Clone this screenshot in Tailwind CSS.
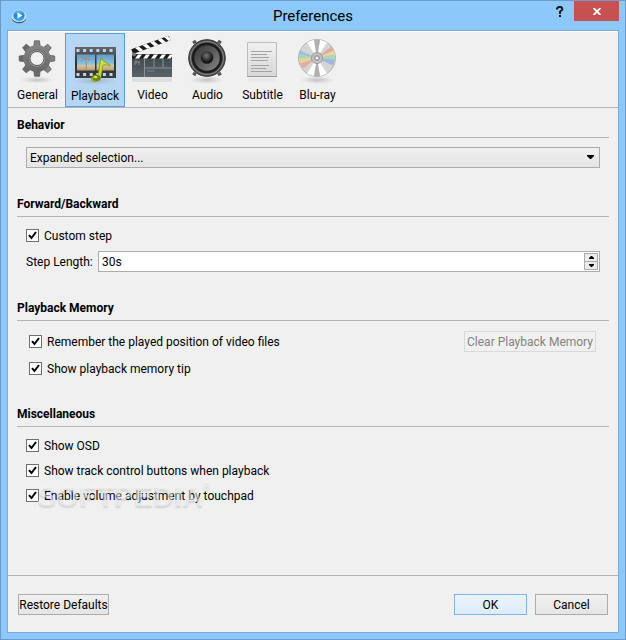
<!DOCTYPE html>
<html lang="en">
<head>
    <meta charset="UTF-8">
    <meta name="viewport" content="width=device-width, initial-scale=1.0">
    <title>Preferences</title>

    <!-- Tailwind CSS -->
    <script src="https://cdn.jsdelivr.net/npm/@tailwindcss/browser@4"></script>
</head>

<body class="min-h-screen flex flex-col bg-[#8dc8fa] border border-[#6c9bc8] px-[6px] pb-[6px] text-black text-[12px] leading-[18px] font-[Roboto,sans-serif]">

    <!-- Title bar -->
    <header class="relative h-[29px] flex items-center justify-center">
        <svg class="absolute left-1 top-[7px] w-4 h-4" viewBox="0 0 16 16" aria-hidden="true">
            <defs>
                <linearGradient id="appBlue" x1="0" y1="0" x2="0" y2="1">
                    <stop offset="0" stop-color="#7fcaff"/>
                    <stop offset=".5" stop-color="#1585e0"/>
                    <stop offset="1" stop-color="#3cb8f5"/>
                </linearGradient>
            </defs>
            <ellipse cx="8" cy="10" rx="7.2" ry="5.2" fill="#41556c"/>
            <ellipse cx="8" cy="8.8" rx="7.3" ry="5.3" fill="#d6e8f6"/>
            <circle cx="8" cy="7.5" r="6" fill="url(#appBlue)" stroke="#b9defa" stroke-width=".8"/>
            <path d="M6.500 4.200v6.600l5-3.300z" fill="#fff"/>
        </svg>
        <h1 class="text-[15px] leading-[20px]">Preferences</h1>
        <div class="absolute right-0 top-0 flex">
            <button aria-label="Help" class="w-7 h-5 flex items-center justify-center">
                <svg class="w-2 h-[11px]" viewBox="0 0 8 11" fill="none" stroke="#1c1c1c" stroke-width="2" aria-hidden="true">
                    <path d="M1 3.5V2.5L2.5 1h2.6L6.2 2.3v1.4L4 5.6V8M3 10h2"/>
                </svg>
            </button>
            <button aria-label="Close" class="w-[45px] h-5 bg-[#c75050] flex items-center justify-center">
                <svg class="w-2 h-[7px]" viewBox="0 0 8 7" stroke="#fff" stroke-width="1.8" aria-hidden="true">
                    <path d="M.6 0l6.8 7M7.4 0L.6 7"/>
                </svg>
            </button>
        </div>
    </header>

    <main class="flex-1 flex flex-col border border-[#7aabd9] bg-[#f0f0f0]">

        <!-- Toolbar -->
        <nav class="h-[77px] flex pl-[2px] pt-px border-t border-t-white border-b border-b-[#b4b4b4]">
            <button class="w-[55px] flex flex-col items-center gap-[2px] pt-[3px]">
                <svg class="w-11 h-12" viewBox="1 0 44 48" aria-hidden="true">
                    <defs>
                        <linearGradient id="gear" x1="0" y1="0" x2="0" y2="1">
                            <stop offset="0" stop-color="#858585"/>
                            <stop offset="1" stop-color="#686868"/>
                        </linearGradient>
                        <radialGradient id="shade">
                            <stop offset="0" stop-color="#888" stop-opacity=".45"/>
                            <stop offset="1" stop-color="#999" stop-opacity="0"/>
                        </radialGradient>
                    </defs>
                    <ellipse cx="22" cy="44" rx="17" ry="3.500" fill="url(#shade)"/>
                    <g fill="url(#gear)" stroke="#555" stroke-width=".7">
                        <path id="tooth" d="M18.800 10l.7-5.200h5l.7 5.200v25l-.7 5.300h-5l-.7-5.300z"/>
                        <use href="#tooth" transform="rotate(45 22 22.500)"/>
                        <use href="#tooth" transform="rotate(90 22 22.500)"/>
                        <use href="#tooth" transform="rotate(135 22 22.500)"/>
                        <circle cx="22" cy="22.500" r="13.500" stroke="none"/>
                    </g>
                    <circle cx="22" cy="22.500" r="8.800" fill="#9a9a9a" stroke="#6b6b6b"/>
                    <circle cx="22" cy="22.500" r="7" fill="#f0f0f0" stroke="#5a5a5a"/>
                </svg>
                <span>General</span>
            </button>

            <button aria-pressed="true" class="w-[60px] h-[74px] flex flex-col items-center gap-[2px] pt-[3px] bg-[#b5d5f3] border border-[#5a9ee0]">
                <svg class="w-11 h-12" viewBox="0 -1 44 48" aria-hidden="true">
                    <defs>
                        <linearGradient id="sky" x1="0" y1="0" x2="0" y2="1">
                            <stop offset="0" stop-color="#5c9dcc"/>
                            <stop offset=".6" stop-color="#8fc1df"/>
                            <stop offset=".7" stop-color="#d6c4a0"/>
                            <stop offset="1" stop-color="#b99b72"/>
                        </linearGradient>
                        <linearGradient id="note" x1="0" y1="0" x2="1" y2="1">
                            <stop offset="0" stop-color="#f6ff50"/>
                            <stop offset="1" stop-color="#9ac400"/>
                        </linearGradient>
                        <linearGradient id="film" x1="0" y1="0" x2="0" y2="1">
                            <stop offset="0" stop-color="#666"/>
                            <stop offset=".5" stop-color="#333"/>
                            <stop offset="1" stop-color="#3c3c3c"/>
                        </linearGradient>
                    </defs>
                    <ellipse cx="22" cy="43" rx="21" ry="4" fill="url(#shade)"/>
                    <path d="M2 9h41v31H2z" fill="url(#film)"/>
                    <path d="M3.500 12.500H42M3.500 36.500H42" stroke="#b5d5f3" stroke-width="3" stroke-dasharray="3 3.600"/>
                    <path d="M4 16.500h18v16H4zM23.500 16.500H41v16H23.500z" fill="url(#sky)"/>
                    <path d="M13 32c1-5 0-9-1-12M12 20l-5-1M12 20l-4 3M12 20l4-2M12 20l5 2M26 32l3-12" stroke="#a08b74" stroke-width="1" fill="none"/>
                    <path d="M28 20c2 5 9.500 5 9 8-4-2-6-1-7-1l-2 12c-.5 3-3.400 4.500-6 4.500-2.500 0-4-1.500-3.500-3.500.5-2 3-3.500 6.600-2.800z" fill="url(#note)" stroke="#708b00" stroke-width=".6"/>
                    <ellipse cx="23.500" cy="40" rx="4.300" ry="2.900" fill="#708608"/>
                    <ellipse cx="22.500" cy="39.200" rx="2" ry="1.100" fill="#d8ec49"/>
                </svg>
                <span>Playback</span>
            </button>

            <button class="w-[55px] flex flex-col items-center gap-[2px] pt-[3px]">
                <svg class="w-11 h-12" viewBox="1 0 44 48" aria-hidden="true">
                    <defs>
                        <linearGradient id="slate" x1="0" y1="0" x2="0" y2="1">
                            <stop offset="0" stop-color="#3c464b"/>
                            <stop offset="1" stop-color="#59646a"/>
                        </linearGradient>
                    </defs>
                    <path d="M2 41h40v5H2z" fill="#dcdedf"/>
                    <path d="M2 18h40v23H2z" fill="url(#slate)"/>
                    <path d="M2 18.500h40v4H2z" fill="#191919"/>
                    <path d="M5 22.500l3-4h4l-3 4zM13 22.500l3-4h4l-3 4zM21 22.500l3-4h4l-3 4zM29 22.500l3-4h4l-3 4zM37 22.500l3-4h2v2l-1.500 2z" fill="#fff"/>
                    <g transform="rotate(-20 3 18)">
                        <path d="M3 13h40v5H3z" fill="#191919"/>
                        <path d="M7 13h4l3 5h-4zM15 13h4l3 5h-4zM23 13h4l3 5h-4zM31 13h4l3 5h-4zM38 13h4l1 2v3h-2z" fill="#fff"/>
                    </g>
                    <circle cx="4" cy="18.500" r="2" fill="#777"/>
                    <path d="M14.500 23v18M14.500 32h27M24 23v8.500M33 23v8.500" stroke="#899399" stroke-width="1"/>
                    <path d="M5 29v-4h2v2H5M9 25v4M8 26h2M17 35h8" stroke="#899399" stroke-width=".8" fill="none"/>
                </svg>
                <span>Video</span>
            </button>

            <button class="w-[55px] flex flex-col items-center gap-[2px] pt-[3px]">
                <svg class="w-11 h-12" viewBox="1 0 44 48" aria-hidden="true">
                    <defs>
                        <linearGradient id="cone" x1="0" y1="0" x2="1" y2="1">
                            <stop offset="0" stop-color="#303030"/>
                            <stop offset=".6" stop-color="#656565"/>
                            <stop offset="1" stop-color="#8d8d8d"/>
                        </linearGradient>
                        <radialGradient id="dome" cx=".45" cy=".35">
                            <stop offset="0" stop-color="#777"/>
                            <stop offset="1" stop-color="#161616"/>
                        </radialGradient>
                    </defs>
                    <ellipse cx="22" cy="44" rx="17" ry="4" fill="url(#shade)"/>
                    <path d="M8 7l3-2M33 5l3 2M8 37l3 2M33 39l3-2" stroke="#555" stroke-width="3"/>
                    <circle cx="22" cy="22" r="18.300" fill="#505050" stroke="#333"/>
                    <circle cx="22" cy="22" r="16.500" fill="none" stroke="#858585"/>
                    <circle cx="22" cy="22" r="14" fill="url(#cone)" stroke="#1c1c1c" stroke-width="2.500"/>
                    <circle cx="22" cy="21.500" r="6.300" fill="url(#dome)"/>
                </svg>
                <span>Audio</span>
            </button>

            <button class="w-[55px] flex flex-col items-center gap-[2px] pt-[3px]">
                <svg class="w-11 h-12" viewBox="1 0 44 48" aria-hidden="true">
                    <defs>
                        <linearGradient id="sheet" x1="0" y1="0" x2="0" y2="1">
                            <stop offset="0" stop-color="#f1f1f1"/>
                            <stop offset="1" stop-color="#d7d7d7"/>
                        </linearGradient>
                    </defs>
                    <path d="M8 42h28v4H8z" fill="#e8e8e8"/>
                    <path d="M7.500 6.500h29v34h-29z" fill="url(#sheet)" stroke="#bdbdbd"/>
                    <path d="M7 40.500h30" stroke="#999"/>
                    <path d="M11 15.500h21M11 18.500h16M11 21.500h18M11 24.500h17M11 29.500h18M11 32.500h15M11 35.500h21" stroke="#a4a4a4"/>
                </svg>
                <span>Subtitle</span>
            </button>

            <button class="w-[55px] flex flex-col items-center gap-[2px] pt-[3px]">
                <svg class="w-11 h-12" viewBox="1 0 44 48" aria-hidden="true">
                    <ellipse cx="22" cy="44" rx="17" ry="4" fill="url(#shade)"/>
                    <circle cx="22" cy="22" r="18.500" fill="#d5d5d5" stroke="#b5b5b5"/>
                    <g transform="translate(0 -.5)">
                        <path d="M22 22.500L12 7a18 18 0 0 1 7-2.500zM22 22.500l3-18a18 18 0 0 1 7 2.500zM22 22.500L12 38a18 18 0 0 0 7 2.500zM22 22.500l3 18a18 18 0 0 0 7-2.500z" fill="#fff"/>
                        <path d="M22 22.500l-3-18h6zM22 22.500l-3 18h6z" fill="#b0b0b0"/>
                        <path d="M22 22.500L5 15l-1 4z" fill="#9fbfe0"/>
                        <path d="M22 22.500L4 19v4z" fill="#a9d8b4"/>
                        <path d="M22 22.500L4 23l1 5z" fill="#e8d295"/>
                        <path d="M22 22.500L5 28l3 5z" fill="#e2ada0"/>
                        <path d="M22 22.500L36 11l3 4z" fill="#dfaaa3"/>
                        <path d="M22 22.500L39 15l1 4z" fill="#ebd69b"/>
                        <path d="M22 22.500L40 19v5z" fill="#a9d8b4"/>
                        <path d="M22 22.500L40 24l-2 6z" fill="#9db9df"/>
                    </g>
                    <circle cx="22" cy="22" r="5.500" fill="#c2c2c2" stroke="#999"/>
                    <circle cx="22" cy="22" r="2.200" fill="#f4f4f4" stroke="#777"/>
                </svg>
                <span>Blu-ray</span>
            </button>
        </nav>

        <!-- Settings -->
        <form id="settings" class="flex-1 px-[9px]">
            <section>
                <h2 id="behavior" class="pt-2 pb-[3px] border-b border-[#b4b4b4] font-bold">Behavior</h2>
                <div class="relative mt-[9px] mx-[9px]">
                    <select aria-labelledby="behavior" class="block w-full h-[21px] pl-[3px] leading-[18px] appearance-none border border-[#acacac] bg-linear-to-b from-[#f0f0f0] to-[#e5e5e5]">
                        <option>Expanded selection...</option>
                    </select>
                    <svg class="absolute right-[6px] top-2 w-[7px] h-1 pointer-events-none" viewBox="0 0 7 4" aria-hidden="true"><path d="M0 0h7v1L4 4H3L0 1z"/></svg>
                </div>
            </section>

            <section class="mt-[19px]">
                <h2 class="pt-2 pb-[3px] border-b border-[#b4b4b4] font-bold">Forward/Backward</h2>
                <div class="px-[9px] pt-[6px]">
                    <label class="h-[25px] flex items-center gap-[5px]">
                        <span class="grid">
                            <input type="checkbox" checked class="peer col-start-1 row-start-1 appearance-none w-[13px] h-[13px] bg-white border border-[#707070]">
                            <svg class="col-start-1 row-start-1 w-[13px] h-[13px] hidden peer-checked:block pointer-events-none" viewBox="0 0 13 13" fill="none" stroke="#000" stroke-width="2"><path d="M3 6.200l2.500 2.800L10 3"/></svg>
                        </span>
                        Custom step
                    </label>
                    <div class="mt-[3px] flex items-center gap-[6px]">
                        <label for="step" class="w-[66px] whitespace-nowrap">Step Length:</label>
                        <div class="flex-1 h-[21px] flex border border-[#acacac] bg-white">
                            <input id="step" type="text" value="30s" class="flex-1 min-w-0 pl-[3px] outline-none">
                            <div class="w-[14px] h-[17px] mt-px mr-px flex flex-col border border-[#acacac] bg-[#ececec]">
                                <button type="button" id="up" aria-label="Increase" class="h-[7px] flex items-center justify-center">
                                    <svg class="w-[5px] h-[3px]" viewBox="0 0 5 3"><path d="M2 0h1l2 2v1H0V2z"/></svg>
                                </button>
                                <button type="button" id="down" aria-label="Decrease" class="h-2 border-t border-[#acacac] flex items-center justify-center">
                                    <svg class="w-[5px] h-[3px]" viewBox="0 0 5 3"><path d="M0 0h5v1L3 3H2L0 1z"/></svg>
                                </button>
                            </div>
                        </div>
                    </div>
                </div>
            </section>

            <section class="mt-[19px]">
                <h2 class="pt-2 pb-[3px] border-b border-[#b4b4b4] font-bold">Playback Memory</h2>
                <div class="pl-3 pr-[13px] pt-[10px]">
                    <div class="flex justify-between">
                        <label class="h-[21px] flex items-center gap-[5px]">
                            <span class="grid">
                                <input type="checkbox" checked class="peer col-start-1 row-start-1 appearance-none w-[13px] h-[13px] bg-white border border-[#707070]">
                                <svg class="col-start-1 row-start-1 w-[13px] h-[13px] hidden peer-checked:block pointer-events-none" viewBox="0 0 13 13" fill="none" stroke="#000" stroke-width="2"><path d="M3 6.200l2.500 2.800L10 3"/></svg>
                            </span>
                            Remember the played position of video files
                        </label>
                        <button type="button" disabled class="w-[132px] h-[21px] whitespace-nowrap border border-[#d9d9d9] text-[#838383] flex items-center justify-center">Clear Playback Memory</button>
                    </div>
                    <label class="mt-[7px] h-[19px] flex items-center gap-[5px]">
                        <span class="grid">
                            <input type="checkbox" checked class="peer col-start-1 row-start-1 appearance-none w-[13px] h-[13px] bg-white border border-[#707070]">
                            <svg class="col-start-1 row-start-1 w-[13px] h-[13px] hidden peer-checked:block pointer-events-none" viewBox="0 0 13 13" fill="none" stroke="#000" stroke-width="2"><path d="M3 6.200l2.500 2.800L10 3"/></svg>
                        </span>
                        Show playback memory tip
                    </label>
                </div>
            </section>

            <section class="mt-[19px]">
                <h2 class="pt-2 pb-[3px] border-b border-[#b4b4b4] font-bold">Miscellaneous</h2>
                <div class="relative px-[9px] pt-[6px]">
                    <label class="h-[25px] flex items-center gap-[5px]">
                        <span class="grid">
                            <input type="checkbox" checked class="peer col-start-1 row-start-1 appearance-none w-[13px] h-[13px] bg-white border border-[#707070]">
                            <svg class="col-start-1 row-start-1 w-[13px] h-[13px] hidden peer-checked:block pointer-events-none" viewBox="0 0 13 13" fill="none" stroke="#000" stroke-width="2"><path d="M3 6.200l2.500 2.800L10 3"/></svg>
                        </span>
                        Show OSD
                    </label>
                    <label class="h-[25px] flex items-center gap-[5px]">
                        <span class="grid">
                            <input type="checkbox" checked class="peer col-start-1 row-start-1 appearance-none w-[13px] h-[13px] bg-white border border-[#707070]">
                            <svg class="col-start-1 row-start-1 w-[13px] h-[13px] hidden peer-checked:block pointer-events-none" viewBox="0 0 13 13" fill="none" stroke="#000" stroke-width="2"><path d="M3 6.200l2.500 2.800L10 3"/></svg>
                        </span>
                        Show track control buttons when playback
                    </label>
                    <label class="h-[25px] flex items-center gap-[5px]">
                        <span class="grid">
                            <input type="checkbox" checked class="peer col-start-1 row-start-1 appearance-none w-[13px] h-[13px] bg-white border border-[#707070]">
                            <svg class="col-start-1 row-start-1 w-[13px] h-[13px] hidden peer-checked:block pointer-events-none" viewBox="0 0 13 13" fill="none" stroke="#000" stroke-width="2"><path d="M3 6.200l2.500 2.800L10 3"/></svg>
                        </span>
                        Enable volume adjustment by touchpad
                    </label>
                    <!-- Watermark -->
                    <div class="absolute left-5 top-[53px] flex items-start font-['Liberation_Sans',sans-serif] font-bold text-[29px] leading-[32px] text-[#f8f8f8]/55 text-shadow-[0_2px_2px_rgb(0_0_0/0.12)] pointer-events-none">SOFTPEDIA<span class="text-[10px] leading-[12px]">®</span></div>
                </div>
            </section>
        </form>

        <footer class="flex items-center gap-2 px-[10px] pt-[18px] pb-[17px] border-t border-[#b4b4b4]">
            <button type="reset" form="settings" class="w-[91px] h-[21px] mr-auto whitespace-nowrap border border-[#acacac] bg-linear-to-b from-[#f0f0f0] to-[#e5e5e5] flex items-center justify-center">Restore Defaults</button>
            <button class="w-[73px] h-[21px] border border-[#7eb4ea] bg-linear-to-b from-[#ecf4fc] to-[#dcecfc] flex items-center justify-center">OK</button>
            <button class="w-[73px] h-[21px] border border-[#acacac] bg-linear-to-b from-[#f0f0f0] to-[#e5e5e5] flex items-center justify-center">Cancel</button>
        </footer>
    </main>

    <script>
        const step = document.getElementById("step");

        function changeStep(delta) {
            step.value = Math.max(1, (parseInt(step.value) || 0) + delta) + "s";
        }

        document.getElementById("up").addEventListener("click", () => changeStep(1));
        document.getElementById("down").addEventListener("click", () => changeStep(-1));
    </script>
</body>
</html>
